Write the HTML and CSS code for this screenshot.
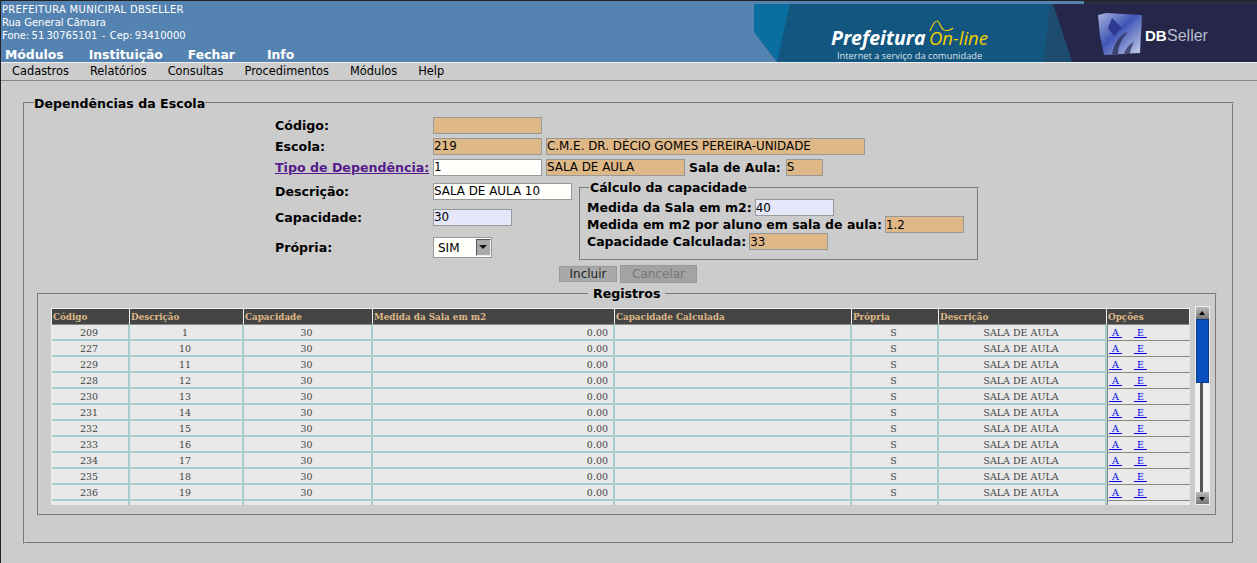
FILE: index.html
```html
<!DOCTYPE html>
<html lang="pt">
<head>
    <meta charset="UTF-8">
    <title>Dependências da Escola</title>
    <link rel="stylesheet" href="styles.css">
</head>
<body>

    <header class="topo">
        <div class="topo-esq">
            <div class="inst">
                <p class="inst-nome">PREFEITURA MUNICIPAL DBSELLER</p>
                <p>Rua General Câmara</p>
                <p class="inst-fone">Fone: 51 30765101 &nbsp;-&nbsp; Cep: 93410000</p>
            </div>
            <nav class="menu1">
                <a>Módulos</a>
                <a>Instituição</a>
                <a>Fechar</a>
                <a>Info</a>
            </nav>
        </div>
        <svg class="banner" width="503" height="61" viewBox="0 -3 503 61">
            <defs>
                <linearGradient id="cubo" x1="0" y1="0" x2="1" y2="1">
                    <stop offset="0" stop-color="#a9b4e0"/>
                    <stop offset="0.45" stop-color="#3f55b4"/>
                    <stop offset="1" stop-color="#cdd5f0"/>
                </linearGradient>
            </defs>
            <rect x="330" y="-3" width="173" height="3" fill="#2a2a3c"/>
            <rect width="503" height="58" fill="#25264a"/>
            <polygon points="0,0 299,0 318,58 23,58 0,28" fill="#13567f"/>
            <polygon points="296,0 299,0 318,58 290,58" fill="#1d4c6e"/>
            <polygon points="0,0 36,0 23,58 0,28" fill="#0a6fa0"/>
            <polygon points="0,28 23,58 0,58" fill="#5583b1"/>
            <path d="M344 11 L352 9 L388 11 L386 49 L350 51 L346 32 Z" fill="url(#cubo)"/>
            <path d="M358 14 L368 24 L360 32 L354 24 Z" fill="#2e3a92"/>
            <path d="M358 50 C360 40 366 30 374 28 C368 34 364 42 364 50 Z" fill="#25264a" opacity="0.7"/>
            <path d="M370 50 C372 44 376 40 380 38 C378 42 376 46 376 50 Z" fill="#25264a" opacity="0.7"/>
            <text x="77" y="41" class="b-pref">Prefeitura</text>
            <text x="175" y="41" class="b-online">On-line</text>
            <path d="M176 27 C178 22 180 17 183 17 C186 17 186 24 190 26 C193 27 197 26 199 24" fill="none" stroke="#f2cf00" stroke-width="1.2"/>
            <text x="83" y="55" class="b-sub">Internet a serviço da comunidade</text>
            <text x="391" y="37" class="b-db">DB</text>
            <text x="413" y="37" class="b-seller">Seller</text>
        </svg>
    </header>

    <nav class="menu2">
        <a>Cadastros</a>
        <a>Relatórios</a>
        <a>Consultas</a>
        <a>Procedimentos</a>
        <a>Módulos</a>
        <a>Help</a>
    </nav>

    <fieldset class="quadro">
        <legend>Dependências da Escola</legend>

        <div class="form">
            <div class="linha l-codigo">
                <label>Código:</label>
                <input class="ro w-109" type="text" readonly>
            </div>
            <div class="linha l-escola">
                <label>Escola:</label>
                <input class="ro w-109" type="text" value="219" readonly>
                <input class="ro w-319" type="text" value="C.M.E. DR. DÉCIO GOMES PEREIRA-UNIDADE" readonly>
            </div>
            <div class="linha l-tipo">
                <label><a class="ancora" href="#">Tipo de Dependência:</a></label>
                <input class="w-109" type="text" value="1">
                <input class="ro w-139" type="text" value="SALA DE AULA" readonly>
                <b class="sala">Sala de Aula:</b>
                <input class="ro w-37" type="text" value="S" readonly>
            </div>

            <div class="meio">
                <div class="esq">
                    <div class="linha l-desc">
                        <label>Descrição:</label>
                        <input class="w-139" type="text" value="SALA DE AULA 10">
                    </div>
                    <div class="linha l-cap">
                        <label>Capacidade:</label>
                        <input class="lil w-79" type="text" value="30">
                    </div>
                    <div class="linha l-propria">
                        <label>Própria:</label>
                        <div class="combo">
                            <select>
                                <option>SIM</option>
                                <option>NÃO</option>
                            </select>
                            <span class="seta"></span>
                        </div>
                    </div>
                </div>

                <fieldset class="calculo">
                    <legend>Cálculo da capacidade</legend>
                    <div class="calc-linha">
                        <b>Medida da Sala em m2:</b>
                        <input class="lil w-79" type="text" value="40">
                    </div>
                    <div class="calc-linha">
                        <b>Medida em m2 por aluno em sala de aula:</b>
                        <input class="ro w-79" type="text" value="1.2" readonly>
                    </div>
                    <div class="calc-linha">
                        <b>Capacidade Calculada:</b>
                        <input class="ro w-79" type="text" value="33" readonly>
                    </div>
                </fieldset>
            </div>

            <div class="botoes">
                <button class="btn-incluir">Incluir</button>
                <button class="btn-cancelar" disabled>Cancelar</button>
            </div>
        </div>

        <fieldset class="registros">
            <legend>Registros</legend>
            <div class="grade">
                <div class="tabela-box">
                    <table>
                        <colgroup>
                            <col class="c1"><col class="c2"><col class="c3"><col class="c4">
                            <col class="c5"><col class="c6"><col class="c7"><col class="c8">
                        </colgroup>
                        <thead>
                            <tr>
                                <th>Código</th>
                                <th>Descrição</th>
                                <th>Capacidade</th>
                                <th>Medida da Sala em m2</th>
                                <th>Capacidade Calculada</th>
                                <th>Própria</th>
                                <th>Descrição</th>
                                <th>Opções</th>
                            </tr>
                        </thead>
                        <tbody>
                            <tr><td>209</td><td>1</td><td>30</td><td class="num">0.00</td><td></td><td>S</td><td>SALA DE AULA</td><td class="opc"><a href="#">&nbsp;A&nbsp;</a><a href="#">&nbsp;E&nbsp;</a></td></tr>
                            <tr><td>227</td><td>10</td><td>30</td><td class="num">0.00</td><td></td><td>S</td><td>SALA DE AULA</td><td class="opc"><a href="#">&nbsp;A&nbsp;</a><a href="#">&nbsp;E&nbsp;</a></td></tr>
                            <tr><td>229</td><td>11</td><td>30</td><td class="num">0.00</td><td></td><td>S</td><td>SALA DE AULA</td><td class="opc"><a href="#">&nbsp;A&nbsp;</a><a href="#">&nbsp;E&nbsp;</a></td></tr>
                            <tr><td>228</td><td>12</td><td>30</td><td class="num">0.00</td><td></td><td>S</td><td>SALA DE AULA</td><td class="opc"><a href="#">&nbsp;A&nbsp;</a><a href="#">&nbsp;E&nbsp;</a></td></tr>
                            <tr><td>230</td><td>13</td><td>30</td><td class="num">0.00</td><td></td><td>S</td><td>SALA DE AULA</td><td class="opc"><a href="#">&nbsp;A&nbsp;</a><a href="#">&nbsp;E&nbsp;</a></td></tr>
                            <tr><td>231</td><td>14</td><td>30</td><td class="num">0.00</td><td></td><td>S</td><td>SALA DE AULA</td><td class="opc"><a href="#">&nbsp;A&nbsp;</a><a href="#">&nbsp;E&nbsp;</a></td></tr>
                            <tr><td>232</td><td>15</td><td>30</td><td class="num">0.00</td><td></td><td>S</td><td>SALA DE AULA</td><td class="opc"><a href="#">&nbsp;A&nbsp;</a><a href="#">&nbsp;E&nbsp;</a></td></tr>
                            <tr><td>233</td><td>16</td><td>30</td><td class="num">0.00</td><td></td><td>S</td><td>SALA DE AULA</td><td class="opc"><a href="#">&nbsp;A&nbsp;</a><a href="#">&nbsp;E&nbsp;</a></td></tr>
                            <tr><td>234</td><td>17</td><td>30</td><td class="num">0.00</td><td></td><td>S</td><td>SALA DE AULA</td><td class="opc"><a href="#">&nbsp;A&nbsp;</a><a href="#">&nbsp;E&nbsp;</a></td></tr>
                            <tr><td>235</td><td>18</td><td>30</td><td class="num">0.00</td><td></td><td>S</td><td>SALA DE AULA</td><td class="opc"><a href="#">&nbsp;A&nbsp;</a><a href="#">&nbsp;E&nbsp;</a></td></tr>
                            <tr><td>236</td><td>19</td><td>30</td><td class="num">0.00</td><td></td><td>S</td><td>SALA DE AULA</td><td class="opc"><a href="#">&nbsp;A&nbsp;</a><a href="#">&nbsp;E&nbsp;</a></td></tr>
                            <tr><td></td><td></td><td></td><td></td><td></td><td></td><td></td><td class="opc"></td></tr>
                        </tbody>
                    </table>
                </div>
                <div class="scroll">
                    <span class="sb-btn sb-cima"></span>
                    <span class="sb-thumb"></span>
                    <span class="sb-trilho"></span>
                    <span class="sb-btn sb-baixo"></span>
                </div>
            </div>
        </fieldset>
    </fieldset>

</body>
</html>
```

FILE: styles.css
```css
* {
    margin: 0;
    padding: 0;
    box-sizing: border-box;
}
html, body {
    height: 563px;
    overflow: hidden;
}
body {
    font-family: "DejaVu Sans", sans-serif;
    background-color: #cccccc;
    border-left: 1px solid #222;
    color: #000;
}

/* topo */
.topo {
    height: 62px;
    background-color: #5583b1;
    border-top: 1px solid #222;
    display: flex;
    justify-content: space-between;
    align-items: flex-end;
    overflow: hidden;
}
.topo-esq {
    padding-left: 1px;
}
.inst {
    font-size: 10px;
    line-height: 13px;
    color: #fff;
    padding-bottom: 3px;
}
.inst-nome {
    letter-spacing: 0.3px;
}
.inst-fone {
    word-spacing: -1px;
}
.menu1 {
    display: flex;
    gap: 25px;
    padding-left: 3px;
    font-size: 12.4px;
    font-weight: bold;
    line-height: 20px;
    color: #fff;
    height: 17px;
}
.menu1 a:last-child {
    margin-left: 7px;
}
.banner {
    flex: none;
    display: block;
}
.b-pref {
    font-family: "Open Sans", sans-serif;
    font-size: 19.5px;
    font-weight: bold;
    font-style: italic;
    fill: #fff;
}
.b-online {
    font-family: "Open Sans", sans-serif;
    font-size: 18.5px;
    font-style: italic;
    fill: #f2cf00;
}
.b-sub {
    font-family: "Open Sans", sans-serif;
    font-size: 9.3px;
    fill: #d8e4ec;
}
.b-db {
    font-family: "Liberation Sans", sans-serif;
    font-size: 15px;
    font-weight: bold;
    fill: #fff;
}
.b-seller {
    font-family: "Liberation Sans", sans-serif;
    font-size: 16px;
    fill: #b9bccb;
}

.menu2 {
    height: 19px;
    display: flex;
    gap: 21px;
    padding-left: 11px;
    font-size: 11.4px;
    line-height: 17px;
    background-color: #cccccc;
    border-top: 1px solid #eee;
    border-bottom: 1px solid #888;
}

/* quadros */
fieldset {
    border: 2px groove #ccc;
    min-width: 0;
}
legend {
    font-weight: bold;
}
.quadro {
    margin: 12px 23px 0 22px;
    height: 451px;
    padding: 0 15px 0 12px;
}
.quadro > legend {
    font-size: 12.6px;
    margin-left: -3px;
    line-height: 16px;
    padding-top: 3px;
}

.form {
    padding: 4px 0 0 238px;
    height: 175px;
}
.linha {
    display: flex;
    align-items: center;
}
.linha label {
    width: 158px;
    font-size: 12.6px;
    font-weight: bold;
    flex: none;
    white-space: nowrap;
}
.ancora {
    color: #551a8b;
}
.l-codigo {
    height: 18px;
}
.l-escola {
    height: 18px;
    margin-top: 3px;
}
.l-tipo {
    height: 18px;
    margin-top: 3px;
}

input {
    height: 17px;
    border: 1px solid #999;
    background-color: #fffffc;
    font-family: "DejaVu Sans", sans-serif;
    font-size: 11.9px;
    padding: 0;
    color: #000;
    outline: none;
}
input.ro {
    background-color: #deb887;
}
input.lil {
    background-color: #e6e6fa;
}
.w-109 { width: 109px; }
.w-319 { width: 319px; margin-left: 4px; }
.w-139 { width: 139px; }
.w-79 { width: 79px; }
.w-37 { width: 37px; }
.l-tipo .w-139 { margin-left: 4px; }
.sala {
    font-size: 12.4px;
    margin: 0 5px 0 4px;
}

.meio {
    display: flex;
    gap: 7px;
    margin-top: 5px;
}
.esq {
    width: 297px;
}
.l-desc {
    height: 18px;
    margin-top: 1px;
}
.l-cap {
    height: 18px;
    margin-top: 8px;
}
.l-propria {
    height: 22px;
    margin-top: 10px;
}
.combo {
    position: relative;
    width: 59px;
    height: 21px;
}
.combo select {
    appearance: none;
    width: 59px;
    height: 21px;
    border: 1px solid #999;
    background-color: #fffffc;
    font-family: "DejaVu Sans", sans-serif;
    font-size: 12px;
    padding-left: 4px;
    border-radius: 0;
}
.seta {
    position: absolute;
    right: 1px;
    top: 2px;
    width: 15px;
    height: 17px;
    background-color: #aaa;
    border-top: 1px solid #555;
    border-left: 1px solid #555;
    border-right: 1px solid #eee;
    border-bottom: 1px solid #eee;
}
.seta::after {
    content: "";
    position: absolute;
    left: 2px;
    top: 5px;
    border-left: 4px solid transparent;
    border-right: 4px solid transparent;
    border-top: 4px solid #111;
}

.calculo {
    width: 400px;
    height: 80px;
    padding: 4px 6px 0;
}
.calculo legend {
    font-size: 12.5px;
    line-height: 14px;
    margin-left: 2px;
    padding: 0 1px;
}
.calc-linha {
    display: flex;
    align-items: center;
    gap: 3px;
    height: 17px;
    font-size: 12.5px;
}

.botoes {
    display: flex;
    gap: 3px;
    margin-top: 4px;
    padding-left: 284px;
    align-items: center;
}
.botoes button {
    font-family: "DejaVu Sans", sans-serif;
    font-size: 12px;
    border: 1px solid #999;
}
.btn-incluir {
    width: 58px;
    height: 16px;
    background-color: #a9a9a9;
    color: #222;
}
.btn-cancelar {
    width: 77px;
    height: 18px;
    background-color: #a3a3a3;
    color: #777;
}

.registros {
    height: 229px;
    padding: 4px 5px 0 12px;
}
.registros > legend {
    font-size: 12.6px;
    line-height: 14px;
    margin-left: 537px;
    padding: 0 5px;
}

/* tabela */
.grade {
    display: flex;
    gap: 5px;
    align-items: flex-start;
}
.tabela-box {
    width: 1139px;
    height: 197px;
    margin-top: 3px;
    overflow: hidden;
    border-left: 1px solid #eee;
    border-top: 1px solid #eee;
    flex: none;
}
table {
    width: 1138px;
    table-layout: fixed;
    border-collapse: separate;
    border-spacing: 0;
    font-family: "DejaVu Serif", serif;
    font-size: 9.5px;
}
.c1 { width: 78px; }
.c2 { width: 114px; }
.c3 { width: 129px; }
.c4 { width: 242px; }
.c5 { width: 237px; }
.c6 { width: 87px; }
.c7 { width: 168px; }
.c8 { width: 83px; }
th {
    height: 16px;
    font-size: 8.8px;
    background-color: #444;
    color: #deb887;
    text-align: left;
    padding-left: 1px;
    border-right: 1px solid #eee;
    border-bottom: 1px solid #888;
    overflow: hidden;
    white-space: nowrap;
}
td {
    height: 16px;
    padding-right: 2px;
    background-color: #e9e9e9;
    color: #444;
    text-align: center;
    border-right: 2px solid #a9cccc;
    border-bottom: 2px solid #a9cccc;
}
td.num {
    text-align: right;
    padding-right: 5px;
}
td.opc {
    text-align: left;
    padding: 0 0 0 1px;
    font-size: 9.5px;
    border-right: 0;
    border-left: 1px solid #888;
    border-bottom: 1px solid #888;
}
td.opc a {
    color: #0000ee;
    margin-right: 12px;
}

/* barra de rolagem */
.scroll {
    width: 15px;
    height: 199px;
    margin-top: 1px;
    flex: none;
    display: flex;
    flex-direction: column;
    border: 1px solid #eee;
    background-color: #fff;
}
.sb-btn {
    height: 12px;
    flex: none;
    background: linear-gradient(#bbb, #777);
    position: relative;
}
.sb-btn::after {
    content: "";
    position: absolute;
    left: 3px;
    border-left: 3px solid transparent;
    border-right: 3px solid transparent;
}
.sb-cima::after {
    top: 4px;
    border-bottom: 4px solid #000;
}
.sb-baixo::after {
    top: 5px;
    border-top: 4px solid #000;
}
.sb-thumb {
    height: 64px;
    flex: none;
    background-color: #0a50c0;
    border: 1px solid #0a3a8c;
}
.sb-trilho {
    flex: 1;
    background: linear-gradient(90deg, #f4f4f4 4px, #555 4px, #555 7px, #f4f4f4 7px);
}
```
